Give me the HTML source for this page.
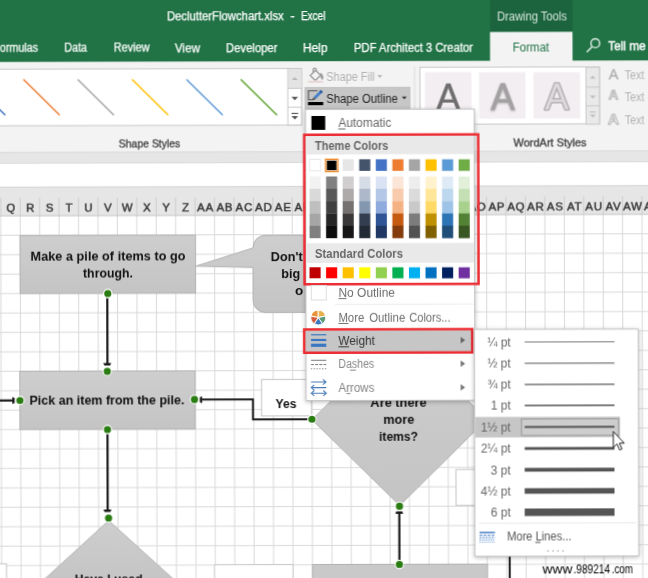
<!DOCTYPE html>
<html><head><meta charset="utf-8"><title>Excel Shape Outline Weight</title>
<style>html,body{margin:0;padding:0;background:#fff}body{width:648px;height:578px;overflow:hidden}svg{display:block;font-family:"Liberation Sans", sans-serif}</style></head>
<body><svg width="648" height="578" viewBox="0 0 648 578">
<g transform="rotate(-0.1375 324 289)" style="filter:blur(0.45px)">
<rect x="-10" y="-10" width="668" height="598" fill="#ffffff"/>
<path d="M-18.48 214V583M0.95 214V583M20.38 214V583M39.81 214V583M59.24 214V583M78.67 214V583M98.1 214V583M117.53 214V583M136.96 214V583M156.39 214V583M175.82 214V583M195.25 214V583M214.68 214V583M234.11 214V583M253.54 214V583M272.97 214V583M292.4 214V583M311.83 214V583M331.26 214V583M350.69 214V583M370.12 214V583M389.55 214V583M408.98 214V583M428.41 214V583M447.84 214V583M467.27 214V583M486.7 214V583M506.13 214V583M525.56 214V583M544.99 214V583M564.42 214V583M583.85 214V583M603.28 214V583M622.71 214V583M642.14 214V583M-5 234.53H653M-5 253.96H653M-5 273.39H653M-5 292.82H653M-5 312.25H653M-5 331.68H653M-5 351.11H653M-5 370.54H653M-5 389.97H653M-5 409.4H653M-5 428.83H653M-5 448.26H653M-5 467.69H653M-5 487.12H653M-5 506.55H653M-5 525.98H653M-5 545.41H653M-5 564.84H653" stroke="#d9d9d9" stroke-width="1" fill="none"/>
<defs><linearGradient id="sg" x1="0" y1="0" x2="0" y2="1"><stop offset="0" stop-color="#cecece"/><stop offset="1" stop-color="#c4c4c4"/></linearGradient></defs>
<rect x="-4.66" y="563.01" width="10.5" height="22" fill="#ffffff" stroke="#c4c4c4" stroke-width="1"/>
<rect x="213.84" y="564.44" width="78.5" height="20" fill="#ffffff" stroke="#c4c4c4" stroke-width="1"/>
<rect x="455.57" y="469.82" width="40" height="36" fill="#ffffff" stroke="#c4c4c4" stroke-width="1"/>
<rect x="311.84" y="564.47" width="175" height="20" fill="#c9c9c9" stroke="#b2b2b2" stroke-width="1"/>
<rect x="20.13" y="234.77" width="175.5" height="58" fill="url(#sg)" stroke="#b2b2b2" stroke-width="1"/>
<text x="108.07" y="259.98" font-size="13.5" fill="#111" font-weight="bold" text-anchor="middle" textLength="155" lengthAdjust="spacingAndGlyphs">Make a pile of items to go</text>
<text x="108.03" y="277.28" font-size="13.5" fill="#111" font-weight="bold" text-anchor="middle" textLength="50" lengthAdjust="spacingAndGlyphs">through.</text>
<path transform="translate(0.05 -0.17)" d="M265 235.5H330V312.5H265A12 12 0 0 1 253 300.5V267.5L196 266L253 248V247.5A12 12 0 0 1 265 235.5Z" fill="url(#sg)" stroke="#b2b2b2" stroke-width="1"/>
<text x="302.87" y="261.35" font-size="13.5" fill="#111" font-weight="bold" text-anchor="end" textLength="32" lengthAdjust="spacingAndGlyphs">Don't</text>
<text x="300.33" y="278.14" font-size="13.5" fill="#111" font-weight="bold" text-anchor="end" textLength="19" lengthAdjust="spacingAndGlyphs">big</text>
<text x="303.28" y="295.45" font-size="13.5" fill="#111" font-weight="bold" text-anchor="end">o</text>
<rect x="19.6" y="370.57" width="175.2" height="58.2" fill="url(#sg)" stroke="#b2b2b2" stroke-width="1"/>
<text x="29.22" y="404.49" font-size="13.5" fill="#111" font-weight="bold" textLength="155" lengthAdjust="spacingAndGlyphs">Pick an item from the pile.</text>
<rect x="261.28" y="379.35" width="50" height="36.5" fill="#ffffff" stroke="#c4c4c4" stroke-width="1"/>
<text x="285.71" y="407.91" font-size="13.5" fill="#111" font-weight="bold" text-anchor="middle" textLength="21" lengthAdjust="spacingAndGlyphs">Yes</text>
<path transform="translate(-0.56 -0.52)" d="M108.7 520.6L179.10000000000002 584.6H38.3Z" fill="url(#sg)" stroke="#b2b2b2" stroke-width="1"/>
<text x="107.89" y="582.68" font-size="13.5" fill="#111" font-weight="bold" text-anchor="middle" textLength="68" lengthAdjust="spacingAndGlyphs">Have I used</text>
<path transform="translate(-0.31 0.18)" d="M312 419.5L399.5 333L487 419.5L399.5 505.5Z" fill="url(#sg)" stroke="#b2b2b2" stroke-width="1"/>
<text x="398.32" y="406.68" font-size="13.5" fill="#111" font-weight="bold" text-anchor="middle" textLength="56.4" lengthAdjust="spacingAndGlyphs">Are there</text>
<text x="398.58" y="423.98" font-size="13.5" fill="#111" font-weight="bold" text-anchor="middle" textLength="31" lengthAdjust="spacingAndGlyphs">more</text>
<text x="398.24" y="440.98" font-size="13.5" fill="#111" font-weight="bold" text-anchor="middle" textLength="39" lengthAdjust="spacingAndGlyphs">items?</text>
<line x1="107.28" y1="297.48" x2="107.28" y2="363.48" stroke="#1a1a1a" stroke-width="2.2"/>
<path transform="translate(-0.18 -0.52)" d="M103.3 362.9H111.3L110.2 365.5H104.4Z" fill="#1a1a1a"/>
<line x1="107.15" y1="433.48" x2="107.15" y2="509.48" stroke="#1a1a1a" stroke-width="2.2"/>
<path transform="translate(-0.53 -0.52)" d="M103.5 509.5H111.5L110.4 512.1H104.6Z" fill="#1a1a1a"/>
<line x1="-3.27" y1="399.72" x2="12.73" y2="399.72" stroke="#1a1a1a" stroke-width="2.2"/>
<path transform="translate(-0.27 -0.75)" d="M12.3 397V404L14.7 403V398Z" fill="#1a1a1a"/>
<path transform="translate(-0.29 -0.17)" d="M201 399.5H253V419.3H308" fill="none" stroke="#1a1a1a" stroke-width="2"/>
<path transform="translate(-0.27 -0.3)" d="M202.1 396.4V403.4L199.8 402.4V397.4Z" fill="#1a1a1a"/>
<line x1="398.76" y1="513.18" x2="398.76" y2="560.18" stroke="#1a1a1a" stroke-width="2.2"/>
<path transform="translate(-0.54 0.18)" d="M395.3 513.9H403.3L402.2 511.3H396.4Z" fill="#1a1a1a"/>
<line x1="509.06" y1="556.45" x2="509.06" y2="584.45" stroke="#1a1a1a" stroke-width="2"/>
<circle cx="107.79" cy="292.98" r="4.7" fill="#ffffff"/><circle cx="107.79" cy="292.98" r="3.6" fill="#2a7d12"/>
<circle cx="107.1" cy="370.78" r="4.7" fill="#ffffff"/><circle cx="107.1" cy="370.78" r="3.6" fill="#2a7d12"/>
<circle cx="19.73" cy="399.77" r="4.7" fill="#ffffff"/><circle cx="19.73" cy="399.77" r="3.6" fill="#2a7d12"/>
<circle cx="107.16" cy="428.98" r="4.7" fill="#ffffff"/><circle cx="107.16" cy="428.98" r="3.6" fill="#2a7d12"/>
<circle cx="194.23" cy="399.19" r="4.7" fill="#ffffff"/><circle cx="194.23" cy="399.19" r="3.6" fill="#2a7d12"/>
<circle cx="108.05" cy="517.48" r="4.7" fill="#ffffff"/><circle cx="108.05" cy="517.48" r="3.6" fill="#2a7d12"/>
<circle cx="311.69" cy="419.27" r="4.7" fill="#ffffff"/><circle cx="311.69" cy="419.27" r="3.6" fill="#2a7d12"/>
<circle cx="398.98" cy="506.38" r="4.7" fill="#ffffff"/><circle cx="398.98" cy="506.38" r="3.6" fill="#2a7d12"/>
<circle cx="398.74" cy="564.68" r="4.7" fill="#ffffff"/><circle cx="398.74" cy="564.68" r="3.6" fill="#2a7d12"/>
<rect x="-10" y="186.4" width="668" height="28.7" fill="#e6e6e6"/>
<path d="M-10 215.1H658" stroke="#c6c6c6" stroke-width="1"/>
<path d="M-18.48 197V215M0.95 197V215M20.38 197V215M39.81 197V215M59.24 197V215M78.67 197V215M98.1 197V215M117.53 197V215M136.96 197V215M156.39 197V215M175.82 197V215M195.25 197V215M214.68 197V215M234.11 197V215M253.54 197V215M272.97 197V215M292.4 197V215M311.83 197V215M331.26 197V215M350.69 197V215M370.12 197V215M389.55 197V215M408.98 197V215M428.41 197V215M447.84 197V215M467.27 197V215M486.7 197V215M506.13 197V215M525.56 197V215M544.99 197V215M564.42 197V215M583.85 197V215M603.28 197V215M622.71 197V215M642.14 197V215" stroke="#cdcdcd" stroke-width="1" fill="none"/>
<text x="11.0" y="211.3" font-size="11.4" fill="#3c3c3c" text-anchor="middle" stroke="#3c3c3c" stroke-width="0.5">Q</text>
<text x="30.4" y="211.3" font-size="11.4" fill="#3c3c3c" text-anchor="middle" stroke="#3c3c3c" stroke-width="0.5">R</text>
<text x="49.8" y="211.3" font-size="11.4" fill="#3c3c3c" text-anchor="middle" stroke="#3c3c3c" stroke-width="0.5">S</text>
<text x="69.3" y="211.3" font-size="11.4" fill="#3c3c3c" text-anchor="middle" stroke="#3c3c3c" stroke-width="0.5">T</text>
<text x="88.7" y="211.3" font-size="11.4" fill="#3c3c3c" text-anchor="middle" stroke="#3c3c3c" stroke-width="0.5">U</text>
<text x="108.1" y="211.3" font-size="11.4" fill="#3c3c3c" text-anchor="middle" stroke="#3c3c3c" stroke-width="0.5">V</text>
<text x="127.5" y="211.3" font-size="11.4" fill="#3c3c3c" text-anchor="middle" stroke="#3c3c3c" stroke-width="0.5">W</text>
<text x="147.0" y="211.3" font-size="11.4" fill="#3c3c3c" text-anchor="middle" stroke="#3c3c3c" stroke-width="0.5">X</text>
<text x="166.4" y="211.3" font-size="11.4" fill="#3c3c3c" text-anchor="middle" stroke="#3c3c3c" stroke-width="0.5">Y</text>
<text x="185.8" y="211.3" font-size="11.4" fill="#3c3c3c" text-anchor="middle" stroke="#3c3c3c" stroke-width="0.5">Z</text>
<text x="205.7" y="211.3" font-size="11.4" fill="#3c3c3c" text-anchor="middle" stroke="#3c3c3c" stroke-width="0.5" letter-spacing="0.8">AA</text>
<text x="225.1" y="211.3" font-size="11.4" fill="#3c3c3c" text-anchor="middle" stroke="#3c3c3c" stroke-width="0.5" letter-spacing="0.8">AB</text>
<text x="244.5" y="211.3" font-size="11.4" fill="#3c3c3c" text-anchor="middle" stroke="#3c3c3c" stroke-width="0.5" letter-spacing="0.8">AC</text>
<text x="264.0" y="211.3" font-size="11.4" fill="#3c3c3c" text-anchor="middle" stroke="#3c3c3c" stroke-width="0.5" letter-spacing="0.8">AD</text>
<text x="283.4" y="211.3" font-size="11.4" fill="#3c3c3c" text-anchor="middle" stroke="#3c3c3c" stroke-width="0.5" letter-spacing="0.8">AE</text>
<text x="302.8" y="211.3" font-size="11.4" fill="#3c3c3c" text-anchor="middle" stroke="#3c3c3c" stroke-width="0.5" letter-spacing="0.8">AF</text>
<text x="322.2" y="211.3" font-size="11.4" fill="#3c3c3c" text-anchor="middle" stroke="#3c3c3c" stroke-width="0.5" letter-spacing="0.8">AG</text>
<text x="341.7" y="211.3" font-size="11.4" fill="#3c3c3c" text-anchor="middle" stroke="#3c3c3c" stroke-width="0.5" letter-spacing="0.8">AH</text>
<text x="361.1" y="211.3" font-size="11.4" fill="#3c3c3c" text-anchor="middle" stroke="#3c3c3c" stroke-width="0.5" letter-spacing="0.8">AI</text>
<text x="380.5" y="211.3" font-size="11.4" fill="#3c3c3c" text-anchor="middle" stroke="#3c3c3c" stroke-width="0.5" letter-spacing="0.8">AJ</text>
<text x="400.0" y="211.3" font-size="11.4" fill="#3c3c3c" text-anchor="middle" stroke="#3c3c3c" stroke-width="0.5" letter-spacing="0.8">AK</text>
<text x="419.4" y="211.3" font-size="11.4" fill="#3c3c3c" text-anchor="middle" stroke="#3c3c3c" stroke-width="0.5" letter-spacing="0.8">AL</text>
<text x="438.8" y="211.3" font-size="11.4" fill="#3c3c3c" text-anchor="middle" stroke="#3c3c3c" stroke-width="0.5" letter-spacing="0.8">AM</text>
<text x="458.3" y="211.3" font-size="11.4" fill="#3c3c3c" text-anchor="middle" stroke="#3c3c3c" stroke-width="0.5" letter-spacing="0.8">AN</text>
<text x="477.7" y="211.3" font-size="11.4" fill="#3c3c3c" text-anchor="middle" stroke="#3c3c3c" stroke-width="0.5" letter-spacing="0.8">AO</text>
<text x="497.1" y="211.3" font-size="11.4" fill="#3c3c3c" text-anchor="middle" stroke="#3c3c3c" stroke-width="0.5" letter-spacing="0.8">AP</text>
<text x="516.5" y="211.3" font-size="11.4" fill="#3c3c3c" text-anchor="middle" stroke="#3c3c3c" stroke-width="0.5" letter-spacing="0.8">AQ</text>
<text x="536.0" y="211.3" font-size="11.4" fill="#3c3c3c" text-anchor="middle" stroke="#3c3c3c" stroke-width="0.5" letter-spacing="0.8">AR</text>
<text x="555.4" y="211.3" font-size="11.4" fill="#3c3c3c" text-anchor="middle" stroke="#3c3c3c" stroke-width="0.5" letter-spacing="0.8">AS</text>
<text x="574.8" y="211.3" font-size="11.4" fill="#3c3c3c" text-anchor="middle" stroke="#3c3c3c" stroke-width="0.5" letter-spacing="0.8">AT</text>
<text x="594.3" y="211.3" font-size="11.4" fill="#3c3c3c" text-anchor="middle" stroke="#3c3c3c" stroke-width="0.5" letter-spacing="0.8">AU</text>
<text x="613.7" y="211.3" font-size="11.4" fill="#3c3c3c" text-anchor="middle" stroke="#3c3c3c" stroke-width="0.5" letter-spacing="0.8">AV</text>
<text x="633.1" y="211.3" font-size="11.4" fill="#3c3c3c" text-anchor="middle" stroke="#3c3c3c" stroke-width="0.5" letter-spacing="0.8">AW</text>
<text x="652.6" y="211.3" font-size="11.4" fill="#3c3c3c" text-anchor="middle" stroke="#3c3c3c" stroke-width="0.5" letter-spacing="0.8">AX</text>
<rect x="-10" y="162.7" width="668" height="23.7" fill="#ffffff"/>
<rect x="-10" y="151.7" width="668" height="11" fill="#e6e6e6"/>
<path d="M-10 186.4H658" stroke="#d2d2d2" stroke-width="1"/>
<path d="M-10 162.5H658" stroke="#dadada" stroke-width="1"/>
<rect x="-10" y="61" width="668" height="90.7" fill="#f3f3f3"/>
<path d="M-10 151.7H658" stroke="#d8d8d8" stroke-width="1"/>
<rect x="-5.47" y="68.41" width="307.5" height="56.6" fill="#ffffff" stroke="#c8c8c8" stroke-width="1"/>
<line x1="-30.0" y1="78.95" x2="5.3" y2="113.95" stroke="#4472c4" stroke-width="1.5" stroke-linecap="round"/>
<line x1="24.3" y1="79.08" x2="59.6" y2="114.08" stroke="#ed7d31" stroke-width="1.5" stroke-linecap="round"/>
<line x1="78.6" y1="79.21" x2="113.9" y2="114.21" stroke="#a5a5a5" stroke-width="1.5" stroke-linecap="round"/>
<line x1="132.9" y1="79.34" x2="168.2" y2="114.34" stroke="#ffc000" stroke-width="1.5" stroke-linecap="round"/>
<line x1="187.4" y1="79.47" x2="222.7" y2="114.47" stroke="#5b9bd5" stroke-width="1.5" stroke-linecap="round"/>
<line x1="241.7" y1="79.6" x2="277.0" y2="114.6" stroke="#70ad47" stroke-width="1.5" stroke-linecap="round"/>
<g transform="translate(0.46 -0.07)" >
<rect x="287.8" y="68.6" width="13.7" height="56.4" fill="#ffffff" stroke="#c8c8c8"/>
<rect x="288.3" y="69.1" width="12.7" height="19" fill="#e4e4e4"/>
<path d="M287.8 88.4H301.5M287.8 107.2H301.5" stroke="#c8c8c8"/>
<path d="M291.8 80L294.8 77L297.8 80Z" fill="#b8b8b8"/>
<path d="M291.5 96.8L294.8 100.3L298.1 96.8Z" fill="#555"/>
<path d="M291.5 113.5H298.1" stroke="#555" stroke-width="1.2"/><path d="M291.5 116L294.8 119.5L298.1 116Z" fill="#555"/>
</g>
<text x="149.84" y="147.48" font-size="11" fill="#444" text-anchor="middle" textLength="61.5" lengthAdjust="spacingAndGlyphs" stroke="#444" stroke-width="0.35">Shape Styles</text>
<g transform="translate(0.51 -0.02)" >
<g fill="none" stroke="#9c9c9c" stroke-width="1.4"><path d="M310.3 75.6L315.6 70.3L320.6 75.3L315.3 80.6Z"/><path d="M313.2 72.8V69.6A1.5 1.5 0 0 1 316.2 69.6V70.8"/></g><path d="M320.6 72.5C324 75.5 324 78.5 322.3 80C320.3 78.8 320.5 76 320.6 72.5Z" fill="#9c9c9c"/>
<rect x="308" y="80.6" width="15" height="2.3" fill="#ead9d9"/>
</g>
<text x="326.8" y="80.61" font-size="12" fill="#b2b2b2" textLength="48.5" lengthAdjust="spacingAndGlyphs">Shape Fill</text>
<path transform="translate(0.51 0.13)" d="M377.4 75.2L379.8 77.8L382.2 75.2Z" fill="#b2b2b2"/>
<rect x="304.98" y="86.95" width="106" height="22.5" fill="#c6c6c6"/>
<g transform="translate(0.46 -0.02)" >
<path d="M317.5 90.8H308.5V99.8H312.5" fill="none" stroke="#555" stroke-width="1.1"/>
<path d="M320.7 92L314.7 98" stroke="#4a82c8" stroke-width="3.1"/><path d="M321.9 90.8L320.3 92.4" stroke="#2c5c9c" stroke-width="3.1"/><path d="M313.5 96.9L315.8 99.2L312.2 100.6Z" fill="#4d4d4d"/>
<rect x="308" y="102" width="15.2" height="3.2" fill="#000"/>
</g>
<text x="326.75" y="102.71" font-size="12" fill="#1e1e1e" textLength="71.5" lengthAdjust="spacingAndGlyphs">Shape Outline</text>
<path transform="translate(0.46 0.19)" d="M401.8 96.6L404.3 99.3L406.8 96.6Z" fill="#333"/>
<line x1="415.04" y1="66.22" x2="415.04" y2="147.22" stroke="#dcdcdc" stroke-width="1"/>
<rect x="420.53" y="67.53" width="179.5" height="57" fill="#ffffff" stroke="#c8c8c8" stroke-width="1"/>
<rect x="425.52" y="72.54" width="46.5" height="46.4" fill="#f2eef1"/>
<rect x="479.52" y="72.67" width="46.5" height="46.4" fill="#f2eef1"/>
<rect x="534.02" y="72.8" width="46.5" height="46.4" fill="#f2eef1"/>
<text x="448.63" y="109.6" font-size="37.5" fill="#6e6e6e" text-anchor="middle" textLength="24" lengthAdjust="spacingAndGlyphs" stroke="#6e6e6e" stroke-width="0.6">A</text>
<text x="503.13" y="109.73" font-size="37.5" fill="#a3a1a2" text-anchor="middle" textLength="24" lengthAdjust="spacingAndGlyphs" stroke="#a3a1a2" stroke-width="0.8" style="filter:drop-shadow(0 1.5px 1px rgba(0,0,0,.25))">A</text>
<text x="557.23" y="109.86" font-size="37.5" fill="#dcd8db" text-anchor="middle" textLength="24" lengthAdjust="spacingAndGlyphs" stroke="#aeabad" stroke-width="2.6" paint-order="stroke" stroke-linejoin="round">A</text>
<g transform="translate(0.46 0.64)" >
<rect x="586" y="67.3" width="13.5" height="57" fill="#e9e9e9" stroke="#c8c8c8"/>
<path d="M586 87.1H599.5M586 105.8H599.5" stroke="#c8c8c8"/>
<path d="M589.8 78.5L592.8 75.5L595.8 78.5Z" fill="#bdbdbd"/>
<path d="M589.8 95.5L592.8 98.5L595.8 95.5Z" fill="#bdbdbd"/>
<path d="M589.8 112H595.8" stroke="#bdbdbd" stroke-width="1.1"/><path d="M589.8 114.5L592.8 117.5L595.8 114.5Z" fill="#bdbdbd"/>
</g>
<text x="550.34" y="146.54" font-size="11" fill="#444" text-anchor="middle" textLength="73" lengthAdjust="spacingAndGlyphs" stroke="#444" stroke-width="0.35">WordArt Styles</text>
<text x="614.0" y="80.29" font-size="14.5" fill="#b2b2b2" text-anchor="middle" stroke="#b2b2b2" stroke-width="0.4">A</text>
<text x="613.95" y="100.19" font-size="13.5" fill="#f3f3f3" font-weight="bold" text-anchor="middle" stroke="#b2b2b2" stroke-width="0.9">A</text>
<text x="613.9" y="124.99" font-size="15.5" fill="#f3f3f3" font-weight="bold" text-anchor="middle" stroke="#b2b2b2" stroke-width="0.9">A</text>
<text x="625.3" y="80.02" font-size="12" fill="#b2b2b2" textLength="19.5" lengthAdjust="spacingAndGlyphs">Text</text>
<text x="625.25" y="102.02" font-size="12" fill="#b2b2b2" textLength="19.5" lengthAdjust="spacingAndGlyphs">Text</text>
<text x="625.2" y="124.52" font-size="12" fill="#b2b2b2" textLength="19.5" lengthAdjust="spacingAndGlyphs">Text</text>
<rect x="-10" y="-10" width="668" height="71.2" fill="#217346"/>
<rect x="490.72" y="-9.6" width="82.5" height="42" fill="#1c643d"/>
<rect x="490.62" y="32.4" width="82.5" height="30.5" fill="#f3f3f3"/>
<text x="167.64" y="19.92" font-size="12" fill="#fff" textLength="116.8" lengthAdjust="spacingAndGlyphs" stroke="#fff" stroke-width="0.25">DeclutterFlowchart.xlsx</text>
<text x="290.94" y="20.22" font-size="12" fill="#fff" textLength="4.5" lengthAdjust="spacingAndGlyphs" stroke="#fff" stroke-width="0.25">-</text>
<text x="301.64" y="20.24" font-size="12" fill="#fff" textLength="24.5" lengthAdjust="spacingAndGlyphs" stroke="#fff" stroke-width="0.25">Excel</text>
<text x="532.64" y="20.8" font-size="12" fill="#d5e6dc" text-anchor="middle" textLength="70" lengthAdjust="spacingAndGlyphs">Drawing Tools</text>
<text x="0.57" y="51.12" font-size="12" fill="#fff" textLength="38" lengthAdjust="spacingAndGlyphs" stroke="#fff" stroke-width="0.25">ormulas</text>
<text x="64.97" y="51.28" font-size="12" fill="#fff" textLength="22.6" lengthAdjust="spacingAndGlyphs" stroke="#fff" stroke-width="0.25">Data</text>
<text x="114.27" y="51.4" font-size="12" fill="#fff" textLength="36" lengthAdjust="spacingAndGlyphs" stroke="#fff" stroke-width="0.25">Review</text>
<text x="175.57" y="51.54" font-size="12" fill="#fff" textLength="25" lengthAdjust="spacingAndGlyphs" stroke="#fff" stroke-width="0.25">View</text>
<text x="226.57" y="51.66" font-size="12" fill="#fff" textLength="51.5" lengthAdjust="spacingAndGlyphs" stroke="#fff" stroke-width="0.25">Developer</text>
<text x="303.57" y="51.85" font-size="12" fill="#fff" textLength="24.5" lengthAdjust="spacingAndGlyphs" stroke="#fff" stroke-width="0.25">Help</text>
<text x="354.57" y="51.97" font-size="12" fill="#fff" textLength="119" lengthAdjust="spacingAndGlyphs" stroke="#fff" stroke-width="0.25">PDF Architect 3 Creator</text>
<text x="531.57" y="52.3" font-size="12" fill="#217346" text-anchor="middle" textLength="36.5" lengthAdjust="spacingAndGlyphs">Format</text>
<g transform="translate(0.58 0.64)" >
<circle cx="595.3" cy="43.3" r="4.4" fill="none" stroke="#e1efe6" stroke-width="1.4"/><path d="M592.2 46.6L586.8 52.2" stroke="#e1efe6" stroke-width="1.5"/>
</g>
<text x="608.87" y="51.38" font-size="12.5" fill="#fff" textLength="37.5" lengthAdjust="spacingAndGlyphs" stroke="#fff" stroke-width="0.4">Tell me</text>
<g style="filter:drop-shadow(0 1px 2px rgba(0,0,0,.28))">
<rect x="305.93" y="109.56" width="168.7" height="291" fill="#ffffff" stroke="#c6c6c6" stroke-width="1"/>
</g>
<rect x="311.82" y="115.97" width="13.8" height="13.9" fill="#000"/>
<text x="338.69" y="127.33" font-size="12" fill="#666" textLength="53" lengthAdjust="spacingAndGlyphs">Automatic</text>
<line x1="338.68" y1="129.03" x2="345.88" y2="129.03" stroke="#666" stroke-width="1"/>
<rect x="306.37" y="135.96" width="167.7" height="18.5" fill="#e9e9e9"/>
<text x="315.33" y="150.18" font-size="12" fill="#666" font-weight="bold" textLength="73.3" lengthAdjust="spacingAndGlyphs">Theme Colors</text>
<rect x="309.81" y="159.27" width="11.1" height="11.6" fill="#ffffff" stroke="#e2e2e2" stroke-width="0.8"/>
<rect x="309.77" y="176.47" width="11.1" height="12.5" fill="#f2f2f2"/>
<rect x="309.74" y="188.77" width="11.1" height="12.5" fill="#d9d9d9"/>
<rect x="309.71" y="201.07" width="11.1" height="12.5" fill="#bfbfbf"/>
<rect x="309.68" y="213.37" width="11.1" height="12.5" fill="#a6a6a6"/>
<rect x="309.65" y="225.67" width="11.1" height="12.5" fill="#808080"/>
<rect x="309.55" y="267.27" width="11.1" height="11" fill="#c00000"/>
<rect x="326.38" y="159.3" width="11.1" height="11.6" fill="#000000"/>
<rect x="326.34" y="176.5" width="11.1" height="12.5" fill="#808080"/>
<rect x="326.31" y="188.8" width="11.1" height="12.5" fill="#595959"/>
<rect x="326.28" y="201.1" width="11.1" height="12.5" fill="#404040"/>
<rect x="326.25" y="213.4" width="11.1" height="12.5" fill="#262626"/>
<rect x="326.22" y="225.7" width="11.1" height="12.5" fill="#0d0d0d"/>
<rect x="326.12" y="267.3" width="11.1" height="11" fill="#ff0000"/>
<rect x="342.95" y="159.34" width="11.1" height="11.6" fill="#e7e6e6"/>
<rect x="342.91" y="176.54" width="11.1" height="12.5" fill="#d0cece"/>
<rect x="342.88" y="188.84" width="11.1" height="12.5" fill="#aeaaaa"/>
<rect x="342.85" y="201.14" width="11.1" height="12.5" fill="#757171"/>
<rect x="342.82" y="213.44" width="11.1" height="12.5" fill="#3a3838"/>
<rect x="342.79" y="225.74" width="11.1" height="12.5" fill="#161616"/>
<rect x="342.69" y="267.34" width="11.1" height="11" fill="#ffc000"/>
<rect x="359.52" y="159.38" width="11.1" height="11.6" fill="#44546a"/>
<rect x="359.48" y="176.58" width="11.1" height="12.5" fill="#d6dce5"/>
<rect x="359.45" y="188.88" width="11.1" height="12.5" fill="#adb9ca"/>
<rect x="359.42" y="201.18" width="11.1" height="12.5" fill="#8497b0"/>
<rect x="359.39" y="213.48" width="11.1" height="12.5" fill="#333f50"/>
<rect x="359.36" y="225.78" width="11.1" height="12.5" fill="#222a35"/>
<rect x="359.26" y="267.38" width="11.1" height="11" fill="#ffff00"/>
<rect x="376.09" y="159.42" width="11.1" height="11.6" fill="#4472c4"/>
<rect x="376.05" y="176.62" width="11.1" height="12.5" fill="#dae3f3"/>
<rect x="376.02" y="188.92" width="11.1" height="12.5" fill="#b4c7e7"/>
<rect x="375.99" y="201.22" width="11.1" height="12.5" fill="#8faadc"/>
<rect x="375.96" y="213.52" width="11.1" height="12.5" fill="#2f5597"/>
<rect x="375.93" y="225.82" width="11.1" height="12.5" fill="#203864"/>
<rect x="375.83" y="267.42" width="11.1" height="11" fill="#92d050"/>
<rect x="392.66" y="159.46" width="11.1" height="11.6" fill="#ed7d31"/>
<rect x="392.62" y="176.66" width="11.1" height="12.5" fill="#fbe5d6"/>
<rect x="392.59" y="188.96" width="11.1" height="12.5" fill="#f8cbad"/>
<rect x="392.56" y="201.26" width="11.1" height="12.5" fill="#f4b183"/>
<rect x="392.53" y="213.56" width="11.1" height="12.5" fill="#c55a11"/>
<rect x="392.5" y="225.86" width="11.1" height="12.5" fill="#843c0c"/>
<rect x="392.4" y="267.46" width="11.1" height="11" fill="#00b050"/>
<rect x="409.23" y="159.5" width="11.1" height="11.6" fill="#a5a5a5"/>
<rect x="409.19" y="176.7" width="11.1" height="12.5" fill="#ededed"/>
<rect x="409.16" y="189.0" width="11.1" height="12.5" fill="#dbdbdb"/>
<rect x="409.13" y="201.3" width="11.1" height="12.5" fill="#c9c9c9"/>
<rect x="409.1" y="213.6" width="11.1" height="12.5" fill="#7c7c7c"/>
<rect x="409.07" y="225.9" width="11.1" height="12.5" fill="#525252"/>
<rect x="408.97" y="267.5" width="11.1" height="11" fill="#00b0f0"/>
<rect x="425.8" y="159.54" width="11.1" height="11.6" fill="#ffc000"/>
<rect x="425.76" y="176.74" width="11.1" height="12.5" fill="#fff2cc"/>
<rect x="425.73" y="189.04" width="11.1" height="12.5" fill="#ffe699"/>
<rect x="425.7" y="201.34" width="11.1" height="12.5" fill="#ffd966"/>
<rect x="425.67" y="213.64" width="11.1" height="12.5" fill="#bf9000"/>
<rect x="425.64" y="225.94" width="11.1" height="12.5" fill="#806000"/>
<rect x="425.54" y="267.54" width="11.1" height="11" fill="#0070c0"/>
<rect x="442.37" y="159.58" width="11.1" height="11.6" fill="#5b9bd5"/>
<rect x="442.33" y="176.78" width="11.1" height="12.5" fill="#deebf7"/>
<rect x="442.3" y="189.08" width="11.1" height="12.5" fill="#bdd7ee"/>
<rect x="442.27" y="201.38" width="11.1" height="12.5" fill="#9dc3e6"/>
<rect x="442.24" y="213.68" width="11.1" height="12.5" fill="#2e75b6"/>
<rect x="442.21" y="225.98" width="11.1" height="12.5" fill="#1f4e79"/>
<rect x="442.11" y="267.58" width="11.1" height="11" fill="#002060"/>
<rect x="458.94" y="159.62" width="11.1" height="11.6" fill="#70ad47"/>
<rect x="458.9" y="176.82" width="11.1" height="12.5" fill="#e2f0d9"/>
<rect x="458.87" y="189.12" width="11.1" height="12.5" fill="#c5e0b4"/>
<rect x="458.84" y="201.42" width="11.1" height="12.5" fill="#a9d18e"/>
<rect x="458.81" y="213.72" width="11.1" height="12.5" fill="#548235"/>
<rect x="458.78" y="226.02" width="11.1" height="12.5" fill="#385723"/>
<rect x="458.68" y="267.62" width="11.1" height="11" fill="#7030a0"/>
<rect x="325.91" y="159.4" width="12.1" height="12.1" fill="#000" stroke="#fbe6cf" stroke-width="2.6"/>
<rect x="325.91" y="159.4" width="12.1" height="12.1" fill="none" stroke="#f08c2e" stroke-width="1.2"/>
<rect x="306.11" y="243.26" width="167.7" height="19.7" fill="#e9e9e9"/>
<text x="315.07" y="258.28" font-size="12" fill="#666" font-weight="bold" textLength="88" lengthAdjust="spacingAndGlyphs">Standard Colors</text>
<rect x="304.57" y="134.75" width="174" height="149.5" fill="none" stroke="#ec2d33" stroke-width="2.5"/>
<rect x="311.31" y="285.47" width="15" height="14.5" fill="#ffffff" stroke="#dedede" stroke-width="1"/>
<text x="338.48" y="296.83" font-size="12" fill="#6e6e6e" textLength="56.5" lengthAdjust="spacingAndGlyphs">No Outline</text>
<line x1="338.48" y1="298.63" x2="346.48" y2="298.63" stroke="#6e6e6e" stroke-width="1"/>
<line x1="334.96" y1="304.33" x2="473.46" y2="304.33" stroke="#ebebeb" stroke-width="1"/>
<g transform="translate(-0.07 -0.01)" >
<path d="M318.3 317.6L311.06 316.06A7.4 7.4 0 0 1 318.30 310.20Z" fill="#e8923a" stroke="#fff" stroke-width="1"/>
<path d="M318.3 317.6L318.30 310.20A7.4 7.4 0 0 1 325.54 316.06Z" fill="#e9b04e" stroke="#fff" stroke-width="1"/>
<path d="M318.3 317.6L325.54 316.06A7.4 7.4 0 0 1 322.44 323.73Z" fill="#5a9a78" stroke="#fff" stroke-width="1"/>
<path d="M318.3 317.6L322.44 323.73A7.4 7.4 0 0 1 314.16 323.73Z" fill="#3a78c0" stroke="#fff" stroke-width="1"/>
<path d="M318.3 317.6L314.16 323.73A7.4 7.4 0 0 1 311.06 316.06Z" fill="#d25c3c" stroke="#fff" stroke-width="1"/>
</g>
<text x="338.42" y="321.73" font-size="12" fill="#6e6e6e" textLength="25.8" lengthAdjust="spacingAndGlyphs">More</text>
<text x="369.22" y="321.81" font-size="12" fill="#6e6e6e" textLength="36" lengthAdjust="spacingAndGlyphs">Outline</text>
<text x="409.22" y="321.9" font-size="12" fill="#6e6e6e" textLength="41.3" lengthAdjust="spacingAndGlyphs">Colors...</text>
<line x1="338.42" y1="323.53" x2="348.42" y2="323.53" stroke="#6e6e6e" stroke-width="1"/>
<rect x="305.4" y="330.46" width="166" height="21.5" fill="#c6c6c6"/>
<line x1="310.89" y1="334.77" x2="326.19" y2="334.77" stroke="#3b76c2" stroke-width="1.2"/>
<line x1="310.88" y1="339.97" x2="326.18" y2="339.97" stroke="#3b76c2" stroke-width="2.2"/>
<line x1="310.86" y1="345.27" x2="326.16" y2="345.27" stroke="#3b76c2" stroke-width="3.2"/>
<text x="338.37" y="345.03" font-size="12" fill="#333" textLength="36.5" lengthAdjust="spacingAndGlyphs">Weight</text>
<line x1="338.36" y1="346.83" x2="348.86" y2="346.83" stroke="#333" stroke-width="1"/>
<path transform="translate(-0.12 0.33)" d="M460.7 337L465.2 340.2L460.7 343.4Z" fill="#666"/>
<rect x="304.1" y="329.45" width="168" height="23.3" fill="none" stroke="#ec2d33" stroke-width="2.5"/>
<line x1="310.83" y1="360.27" x2="326.13" y2="360.27" stroke="#777" stroke-width="1"/>
<line x1="310.82" y1="364.57" x2="326.12" y2="364.57" stroke="#777" stroke-width="1" stroke-dasharray="3 1.2"/>
<line x1="310.81" y1="368.77" x2="326.11" y2="368.77" stroke="#777" stroke-width="1" stroke-dasharray="1.2 1.6"/>
<text x="338.31" y="368.33" font-size="12" fill="#858585" textLength="35.8" lengthAdjust="spacingAndGlyphs">Dashes</text>
<line x1="349.81" y1="370.16" x2="355.81" y2="370.16" stroke="#858585" stroke-width="1"/>
<path transform="translate(-0.18 0.33)" d="M460.7 360.4L465.2 363.6L460.7 366.8Z" fill="#777"/>
<g transform="translate(-0.24 -0.01)" >
<g fill="none" stroke="#4a7cb8" stroke-width="1.1"><path d="M311 382H326M323 379.3L326 382L323 384.7"/><path d="M326.3 387.6H311.3M314.3 384.9L311.3 387.6L314.3 390.3"/><path d="M311.3 393.2H326.3M314.3 390.5L311.3 393.2L314.3 395.9M323.3 390.5L326.3 393.2L323.3 395.9"/></g>
</g>
<text x="338.25" y="391.83" font-size="12" fill="#858585" textLength="36" lengthAdjust="spacingAndGlyphs">Arrows</text>
<line x1="346.25" y1="393.65" x2="350.25" y2="393.65" stroke="#858585" stroke-width="1"/>
<path transform="translate(-0.24 0.33)" d="M460.7 384.2L465.2 387.4L460.7 390.6Z" fill="#777"/>
<g style="filter:drop-shadow(0 1px 2px rgba(0,0,0,.28))">
<rect x="474.3" y="329.86" width="163.8" height="226.8" fill="#ffffff" stroke="#c6c6c6" stroke-width="1"/>
</g>
<rect x="475.09" y="417.36" width="144.6" height="20.5" fill="#c6c6c6"/>
<rect x="521.19" y="419.47" width="97" height="16.5" fill="#cdcdcd" stroke="#999" stroke-width="1"/>
<text x="510.66" y="346.75" font-size="12" fill="#666" text-anchor="end">¼ pt</text>
<rect x="524.57" y="341.98" width="89.8" height="1" fill="#777"/>
<text x="510.61" y="368.05" font-size="12" fill="#666" text-anchor="end">½ pt</text>
<rect x="524.52" y="363.23" width="89.8" height="1.1" fill="#666"/>
<text x="510.56" y="389.25" font-size="12" fill="#666" text-anchor="end">¾ pt</text>
<rect x="524.47" y="384.38" width="89.8" height="1.2" fill="#555"/>
<text x="510.51" y="410.25" font-size="12" fill="#666" text-anchor="end">1 pt</text>
<rect x="524.42" y="405.23" width="89.8" height="1.5" fill="#555"/>
<text x="510.46" y="431.75" font-size="12" fill="#666" text-anchor="end">1½ pt</text>
<rect x="524.37" y="426.48" width="89.8" height="2" fill="#555"/>
<text x="510.41" y="453.25" font-size="12" fill="#666" text-anchor="end">2¼ pt</text>
<rect x="524.32" y="447.58" width="89.8" height="2.8" fill="#555"/>
<text x="510.36" y="474.55" font-size="12" fill="#666" text-anchor="end">3 pt</text>
<rect x="524.27" y="468.38" width="89.8" height="3.8" fill="#555"/>
<text x="510.3" y="495.75" font-size="12" fill="#666" text-anchor="end">4½ pt</text>
<rect x="524.22" y="488.68" width="89.8" height="5.6" fill="#555"/>
<text x="510.25" y="517.05" font-size="12" fill="#666" text-anchor="end">6 pt</text>
<rect x="524.17" y="509.03" width="89.8" height="7.5" fill="#555"/>
<line x1="478.44" y1="523.67" x2="635.44" y2="523.67" stroke="#e8e8e8" stroke-width="1"/>
<line x1="478.92" y1="532.87" x2="494.42" y2="532.87" stroke="#3b76c2" stroke-width="1.4"/>
<line x1="478.91" y1="535.67" x2="494.41" y2="535.67" stroke="#3b76c2" stroke-width="0.9" stroke-dasharray="3 1"/>
<line x1="478.9" y1="537.97" x2="494.4" y2="537.97" stroke="#3b76c2" stroke-width="0.9" stroke-dasharray="2 1"/>
<line x1="478.9" y1="540.27" x2="494.4" y2="540.27" stroke="#3b76c2" stroke-width="0.9" stroke-dasharray="1.2 1"/>
<line x1="478.89" y1="542.57" x2="494.39" y2="542.57" stroke="#3b76c2" stroke-width="0.9" stroke-dasharray="0.8 1.2"/>
<text x="506.4" y="541.04" font-size="12" fill="#555" textLength="64.5" lengthAdjust="spacingAndGlyphs">More Lines...</text>
<line x1="534.69" y1="542.91" x2="539.89" y2="542.91" stroke="#555" stroke-width="1"/>
<circle cx="547.37" cy="551.54" r="0.8" fill="#999"/>
<circle cx="552.37" cy="551.55" r="0.8" fill="#999"/>
<circle cx="557.37" cy="551.56" r="0.8" fill="#999"/>
<circle cx="562.37" cy="551.57" r="0.8" fill="#999"/>
<path transform="translate(-0.34 0.69)" d="M613.3 431.5V447.5L617 444L619.6 450L622 449L619.4 443.2H624.3Z" fill="#fff" stroke="#222" stroke-width="1"/>
<text x="541.72" y="574.12" font-size="12.5" fill="#000" textLength="29.9" lengthAdjust="spacingAndGlyphs">www</text>
<text x="572.72" y="574.2" font-size="12.5" fill="#000" textLength="36.7" lengthAdjust="spacingAndGlyphs">.989214</text>
<text x="610.92" y="574.29" font-size="12.5" fill="#000" textLength="21.3" lengthAdjust="spacingAndGlyphs">.com</text>
</g>
</svg></body></html>
